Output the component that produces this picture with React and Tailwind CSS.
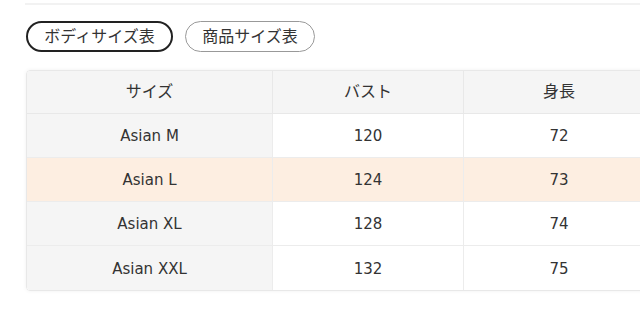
export default function App() {
  const rows = [
    ["Asian M", "120", "72", false],
    ["Asian L", "124", "73", true],
    ["Asian XL", "128", "74", false],
    ["Asian XXL", "132", "75", false],
  ];
  const font = { fontFamily: '"DejaVu Sans", "Noto Sans CJK JP", sans-serif' };
  return (
    <div className="w-[640px] h-[314px] overflow-hidden bg-white text-[#333]" style={font}>
      <div className="pl-[25px] pt-[3px]">
        <div className="h-[2px] bg-[#f2f2f2]" />
        <div className="flex gap-[12px] pt-[16px] pl-[1px]">
          <button className="h-[31px] w-[147px] rounded-full border-2 border-[#222] text-[16px] flex items-center justify-center">
            ボディサイズ表
          </button>
          <button className="h-[31px] w-[130px] rounded-full border border-[#999] text-[16px] flex items-center justify-center">
            商品サイズ表
          </button>
        </div>
      </div>
      <div className="pl-[26px] pt-[18px]">
        <div className="w-[640px] rounded-[4px] border border-[#e8e8e8] shadow-[0_0_4px_rgba(0,0,0,0.06)] overflow-hidden">
          <div className="grid grid-cols-[245px_191px_191px] h-[43px] bg-[#f5f5f5] border-b border-[#e8e8e8] text-[16px]">
            <div className="flex items-center justify-center">サイズ</div>
            <div className="flex items-center justify-center border-l border-[#e8e8e8]">バスト</div>
            <div className="flex items-center justify-center border-l border-[#e8e8e8]">身長</div>
          </div>
          {rows.map(([s, b, h, hl], i) => (
            <div
              key={s}
              className={
                "grid grid-cols-[245px_191px_191px] h-[44px] text-[15px] " +
                (i < rows.length - 1 ? "border-b border-[#ececec] " : "") +
                (hl ? "bg-[#fdeee1]" : "bg-white")
              }
            >
              <div className={"flex items-center justify-center pt-[2px] " + (hl ? "bg-[#fdeee1]" : "bg-[#f5f5f5]")}>{s}</div>
              <div className="flex items-center justify-center pt-[2px] border-l border-[#ececec]">{b}</div>
              <div className="flex items-center justify-center pt-[2px] border-l border-[#ececec]">{h}</div>
            </div>
          ))}
        </div>
      </div>
    </div>
  );
}
